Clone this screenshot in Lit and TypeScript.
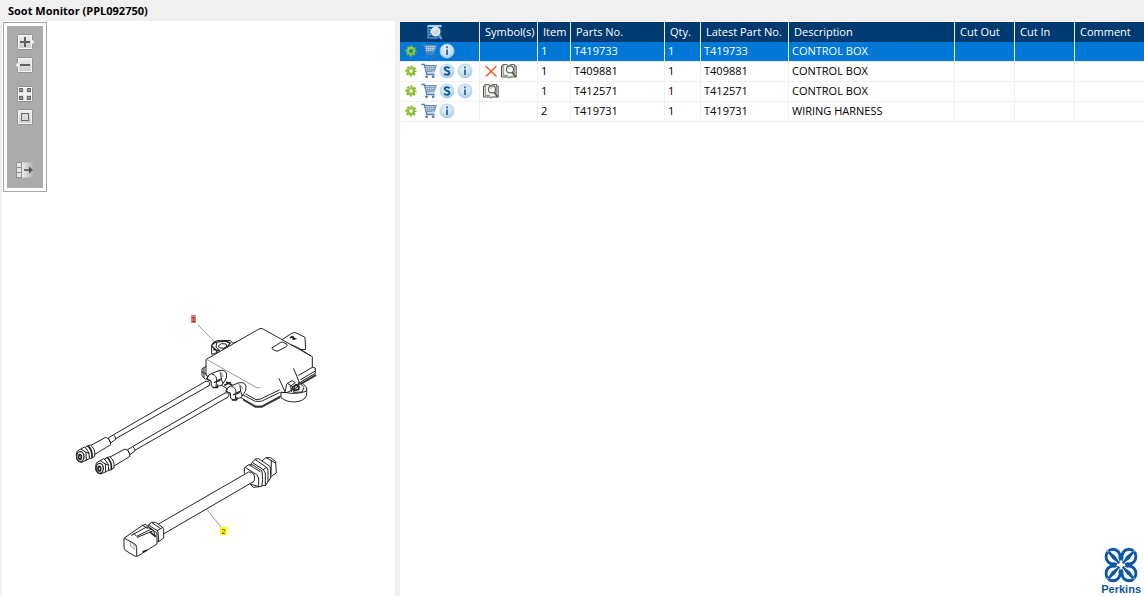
import { LitElement, html, css, svg, nothing } from "lit";
import { customElement, property, state } from "lit/decorators.js";
import { classMap } from "lit/directives/class-map.js";

interface Part {
  item: string;
  partNo: string;
  qty: string;
  latest: string;
  description: string;
  actions: string[];
  symbols: string[];
}

const PARTS: Part[] = [
  { item: "1", partNo: "T419733", qty: "1", latest: "T419733", description: "CONTROL BOX", actions: ["gear", "cart", "info"], symbols: [] },
  { item: "1", partNo: "T409881", qty: "1", latest: "T409881", description: "CONTROL BOX", actions: ["gear", "cart", "super", "info"], symbols: ["cross", "book"] },
  { item: "1", partNo: "T412571", qty: "1", latest: "T412571", description: "CONTROL BOX", actions: ["gear", "cart", "super", "info"], symbols: ["book"] },
  { item: "2", partNo: "T419731", qty: "1", latest: "T419731", description: "WIRING HARNESS", actions: ["gear", "cart", "info"], symbols: [] },
];

const ICON_LABELS: Record<string, string> = {
  gear: "Options",
  cart: "Add to cart",
  super: "Supersession",
  info: "Information",
  cross: "Not serviced",
  book: "Look up publication",
};

const ball = svg`
  <defs><radialGradient id="b" cx=".45" cy=".35" r=".7">
    <stop offset="0" stop-color="#eaf3fa"/><stop offset=".65" stop-color="#c6dff1"/><stop offset="1" stop-color="#8fb9db"/>
  </radialGradient></defs>
  <circle cx="8" cy="8" r="7" fill="url(#b)" stroke="#b4cfe6" stroke-width=".8"/>`;

const ICONS: Record<string, unknown> = {
  gear: svg`
    <circle cx="8" cy="8" r="4.5" fill="none" stroke="#83b92c" stroke-width="2.2" stroke-dasharray="2.1 1.434" stroke-dashoffset="1.05"/>
    <circle cx="8" cy="8" r="3" fill="none" stroke="#8cc234" stroke-width="2.6"/>
    <path d="M4.9 6.8A3.4 3.4 0 0 1 9 4.8" fill="none" stroke="#b8dc6c" stroke-width="1"/>`,
  cart: svg`
    <path d="M.2 1.5H3.4L5.8 11.5H13.6" fill="none" stroke="#4a7fb5" stroke-width="1.3"/>
    <path d="M3.8 2.5H15.3L13.4 8L5.2 8.6Z" fill="#d2dfec" stroke="#5f8dbb" stroke-width="1"/>
    <path d="M6.3 3V8.4M8.5 3V8.4M10.7 3V8.2M12.9 3V8M4.3 4.5H14.6M4.8 6.5H14" stroke="#6f93b8" stroke-width=".7"/>
    <path d="M13.6 8.4L12.6 10H5.9" fill="none" stroke="#7d9fc2" stroke-width=".8"/>
    <circle cx="5.6" cy="13.8" r="1.3" fill="#3d74ad"/><circle cx="12.2" cy="13.8" r="1.3" fill="#3d74ad"/>`,
  info: svg`${ball}
    <circle cx="8" cy="4.4" r="1.1" fill="#3a70a3"/><path d="M8 6.6V12" stroke="#3a70a3" stroke-width="2"/>`,
  super: svg`${ball}
    <path d="M10.6 5.4C9.6 3.8 5.6 3.9 5.7 6C5.8 8.2 10.5 7.4 10.4 9.9C10.3 12.3 6.3 12.2 5.2 10.4" fill="none" stroke="#155f97" stroke-width="2"/>`,
  cross: svg`<path d="M3 3.5L13 13M13 3.5L3.4 13" stroke="#f0602c" stroke-width="1.6" stroke-linecap="round"/>`,
  book: svg`
    <path d="M.5 3H2V1.6H5.8L7.6 3L9.4 1.6H13.6V3H15.2V14H9L7.6 15L6.4 14H.5Z" fill="#f1f1ec" stroke="#55554f" stroke-width="1"/>
    <path d="M2.2 3V12.4H6.2L7.6 13.6M13.6 3V10" fill="none" stroke="#6b6b66" stroke-width=".8"/>
    <circle cx="9" cy="6.4" r="3.5" fill="#f8f9f7" stroke="#62625d" stroke-width="1.1"/>
    <path d="M7.4 6A2 2 0 0 1 9.4 4.6" fill="none" stroke="#aaa" stroke-width=".8"/>
    <path d="M11.2 9.2L14.8 14" stroke="#5d574a" stroke-width="2"/>`,
};

const tile = svg`
  <defs><linearGradient id="t" x1="0" y1="0" x2="0" y2="1">
    <stop offset="0" stop-color="#f0f0f0"/><stop offset="1" stop-color="#cacaca"/>
  </linearGradient></defs>`;
const square = svg`<rect x="2.5" y="2.5" width="15" height="15" rx="1" fill="url(#t)" stroke="#929292"/><rect x="3.5" y="3.5" width="13" height="13" fill="none" stroke="#f4f4f4"/>`;

const TOOLS = [
  {
    label: "Zoom in",
    cls: "",
    art: svg`${tile}${square}<path d="M17 7.5L19.5 10L17 12.5Z" fill="#ececec"/>
      <path d="M5 10H15M10 5V15" stroke="#606060" stroke-width="2"/>`,
  },
  {
    label: "Zoom out",
    cls: "",
    art: svg`${tile}${square}<path d="M3 7.5L.5 10L3 12.5Z" fill="#ececec"/>
      <path d="M5 10H15" stroke="#606060" stroke-width="2"/>`,
  },
  {
    label: "Fit to window",
    cls: "group",
    art: svg`${tile}${square}
      <path d="M10 3V17M3 10H17" stroke="#f2f2f2" stroke-width="2"/>
      <g fill="#999" stroke="#686868"><rect x="4.5" y="4.5" width="3" height="3"/><rect x="12.5" y="4.5" width="3" height="3"/><rect x="4.5" y="12.5" width="3" height="3"/><rect x="12.5" y="12.5" width="3" height="3"/></g>`,
  },
  {
    label: "Actual size",
    cls: "",
    art: svg`${tile}${square}<rect x="6.5" y="6.5" width="7" height="7" fill="#dcdcdc" stroke="#686868"/>`,
  },
  {
    label: "Detach panel",
    cls: "last",
    art: svg`
      <defs><linearGradient id="f"><stop offset="0" stop-color="#ededed"/><stop offset="1" stop-color="#ababab"/></linearGradient></defs>
      <rect x="7" y="2.5" width="12" height="15" fill="url(#f)"/>
      <path d="M1.5 2.5H6M1.5 7.5H6M1.5 12.5H6M1.5 17.5H6M6.5 2V18M1.5 2V18" stroke="#909090"/>
      <path d="M2 3H6V7H2ZM2 8H6V12H2ZM2 13H6V17H2Z" fill="#e6e6e6"/>
      <path d="M9 10H16" stroke="#50554e" stroke-width="1.6"/><path d="M14 6.6L18 10L14 13.4Z" fill="#50554e"/>`,
  },
];

@customElement("tool-palette")
class ToolPalette extends LitElement {
  static styles = css`
    :host { display: block; border: 1px solid #a8a8a8; background: #fff; padding: 3px; }
    .bar { display: flex; flex-direction: column; align-items: center; gap: 3px; background: #ababab; padding: 6px 8px 8px; }
    .tool { display: block; width: 20px; height: 20px; padding: 0; border: 0; background: none; }
    .tool svg { display: block; }
    .group { margin-top: 6px; }
    .last { margin-top: 30px; }
  `;
  render() {
    return html`<div class="bar" role="toolbar" aria-label="View">
      ${TOOLS.map((t) => html`<button class="tool ${t.cls}" aria-label=${t.label}>
        <svg width="20" height="20" viewBox="0 0 20 20">${t.art}</svg>
      </button>`)}
    </div>`;
  }
}

@customElement("parts-drawing")
class PartsDrawing extends LitElement {
  static styles = css`
    :host { display: block; }
    .art { display: block; width: 100%; height: auto; font-family: "Liberation Sans", Arial, sans-serif; }
    .ink { fill: none; stroke: #222; stroke-width: 3; stroke-linejoin: round; stroke-linecap: round; }
    .thin { stroke-width: 2; stroke: #666; }
    .bold { stroke-width: 6; stroke: #333; }
    .solid { fill: #fff; }
    .label { font-size: 7px; text-anchor: middle; fill: #222; }
  `;

  private plug() {
    return svg`
      <path class="solid" d="M72 229L122 202Q136 206 137 224L86 255Z"/>
      <path class="solid" d="M131 203L145 195Q153 199 152 208L138 218Z"/>
      <path class="solid" d="M62 231L76 225Q92 236 89 259L76 266Z"/>
      <path d="M69 228Q83 240 81 263" stroke-width="5"/>
      <path class="solid" d="M37 243L58 231Q74 242 73 266L50 277Q34 276 34 258Z"/>
      <path class="solid" d="M49 238L63 247L73 250M63 247L64 271"/>
      <ellipse cx="46" cy="260" rx="11" ry="15" stroke-width="4"/>
      <ellipse cx="45" cy="261" rx="4" ry="7" stroke-width="5"/>`;
  }

  private gland() {
    return svg`
      <path class="solid" d="M88 224L116 212Q136 207 140 222Q141 236 134 243L126 255L103 263L94 258L93 242L80 237Z"/>
      <path d="M88 224Q80 230 82 239L92 243M97 222Q111 226 110 242L108 260M110 242L124 236L122 220M124 236L128 250"/>
      <path class="thin" d="M113 213Q128 217 129 230"/>
      <path d="M103 247L120 241M99 263L112 263L113 255" stroke-width="4"/>`;
  }

  render() {
    return html`<svg class="art" viewBox="2 21 393 575" role="img" aria-label="Soot monitor assembly">
      <g class="ink" transform="translate(180 300) scale(.33333)">
        <path class="solid" d="M95 162V136Q98 122 122 121L152 122L158 130L180 122L150 145Z"/>
        <path d="M97 134Q104 125 122 125Q144 122 150 129Q146 140 130 147M96 139L108 150L112 158M101 149L118 152" stroke-width="4"/>
        <path d="M116 137L124 131L138 132L140 140L130 145L119 143ZM110 129L108 142L118 150M137 124L151 130"/>
        <path class="solid" d="M306 119L335 100Q343 95 351 100L375 112L377 148L350 150Z"/>
        <path d="M331 113L340 111L339 118L348 116M334 109L343 114" stroke-width="4"/>
        <path class="solid" d="M79 178L235 88Q243 82 251 88L397 170V202L406 204V220L372 240L300 289L246 319H224L170 285L79 226Z"/>
        <path class="bold" d="M406 226L362 252M298 292L246 320H226L192 300"/>
        <path d="M404 214L362 239M397 202L356 226M298 278L244 304H226L186 283M298 270L242 297L228 299L198 282"/>
        <path class="thin" d="M79 178L232 264L240 262M386 164L396 170"/>
        <path d="M277 143L302 127Q307 125 312 128L321 133Q323 137 319 140L294 153Q288 154 284 151L278 148Z"/>
        <path d="M333 134L352 142L391 167"/>
        <path class="solid" stroke="none" d="M297 236L341 206L360 252L378 262V292L344 306L303 293Z"/>
        <path class="solid" d="M303 278V293Q318 306 344 306Q374 303 380 286V262Q372 250 356 247L352 262L322 277Z"/>
        <path d="M297 236L316 277Q345 285 378 274M303 278L316 277M341 206L360 252"/>
        <path d="M316 272L320 252L336 242L346 248L332 258L334 275M346 254L362 252L372 262L366 276L342 277ZM324 251L336 259" />
        <path d="M338 261L348 256L357 259L356 268L344 271L337 267Z" stroke-width="5"/>
        <path d="M78 199L66 207V227L76 238M72 204V232M66 216L78 222"/>
        <path class="thin" d="M54 75L103 125"/>
        <path d="M140 247L155 254M134 255L150 248" stroke-width="5"/>
        ${this.gland()}
        <g transform="translate(58 37)">${this.gland()}</g>
      </g>
      <g class="ink" transform="translate(65 370) scale(.33333)">
        <path class="solid" stroke="none" d="M146 193L426 31L432 44L152 206Z"/>
        <path d="M146 194L422 34M152 206L432 47"/>
        <path class="solid" stroke="none" d="M204 228L482 66L490 80L210 242Z"/>
        <path d="M204 229L480 69M211 240L488 82"/>
        <path class="solid" d="M422 34Q430 30 434 39L432 47M480 69Q488 65 493 74L488 82"/>
        ${this.plug()}
        <g transform="translate(58 35)">${this.plug()}</g>
      </g>
      <g class="ink" transform="translate(110 445) scale(.33333)">
        <path class="solid" d="M455 48L468 38L482 38L497 50L499 84L480 97L455 92Z"/>
        <path d="M470 39L484 47L483 90M484 47L497 54"/>
        <path class="solid" d="M425 54L436 42L446 41L481 65L482 99L466 122L444 119L425 100Z"/>
        <path d="M428 53L460 74L466 84V121M436 44L470 67L474 76V110M460 74L470 67"/>
        <path class="solid" d="M404 68L416 59L429 60L456 78L458 104L455 124L430 127L420 116L424 110L404 96Z"/>
        <path d="M407 68L440 89L446 99V126M418 60L450 80M422 118L444 124"/>
        <path class="solid" stroke="none" d="M144 238L412 80Q434 78 434 98L433 108L160 266Z"/>
        <path d="M144 238L416 81Q434 80 434 100L432 109L162 266"/>
        <path class="solid" d="M113 243L124 232H137L158 247Q162 252 161 260V279L146 290L110 276Z"/>
        <path d="M115 240L142 257Q146 263 146 290M142 257L158 247M126 233L152 251"/>
        <path class="solid" d="M43 279L95 243L106 238L141 264V297L84 333Q78 336 72 332L46 316Q42 312 42 306Z"/>
        <path d="M43 280L72 295Q80 299 80 308V331M64 271L110 246L130 255L136 275M72 266L80 274L124 252M82 277L128 258M96 240L112 250"/>
        <path d="M66 293Q74 298 75 306M62 293V304L75 313" class="thin"/>
        <path d="M99 320L110 316M121 262L136 274" stroke-width="5"/>
        <path class="thin" d="M291 194L333 246"/>
      </g>
      <rect x="191" y="315" width="5" height="8" fill="#f27878"/>
      <text class="label" x="193.5" y="322">1</text>
      <rect x="220" y="527" width="7" height="8" fill="#ff0"/>
      <text class="label" x="223.5" y="534">2</text>
    </svg>`;
  }
}

@customElement("parts-table")
class PartsTable extends LitElement {
  @property({ attribute: false }) parts: Part[] = [];
  @state() selected = 0;

  static styles = css`
    :host { display: block; }
    .grid { width: 100%; table-layout: fixed; border-collapse: separate; border-spacing: 0; }
    .c-actions { width: 80px; }
    .c-symbols { width: 58px; }
    .c-item { width: 33px; }
    .c-part { width: 94px; }
    .c-qty { width: 36px; }
    .c-latest { width: 88px; }
    .c-desc { width: 166px; }
    .c-cut { width: 60px; }
    th { height: 20px; padding: 0 0 0 5px; background: #003a70; color: #fff; font-weight: 400; text-align: left; border-right: 1px solid #f0f0f0; white-space: nowrap; line-height: 16px; }
    td { height: 19px; padding: 0 0 0 3px; border-right: 1px solid #f0f0f0; border-bottom: 1px solid #f0f0f0; white-space: nowrap; line-height: 18px; vertical-align: top; }
    th:last-child, td:last-child { border-right: 0; }
    .find { padding: 0 9px 0 0; }
    .find .icon { margin: 0 auto; }
    .icons { padding: 0 0 0 2px; }
    .row { display: flex; }
    .icon { display: flex; align-items: center; justify-content: center; width: 18px; height: 18px; padding: 0; border: 0; background: none; }
    .selected td { background: #0078d7; color: #fff; }
  `;

  private icons(names: string[]) {
    return html`<div class="row">${names.map((n) => html`<button class="icon" aria-label=${ICON_LABELS[n]}>
      <svg width="16" height="16" viewBox="0 0 16 16">${ICONS[n]}</svg></button>`)}</div>`;
  }

  render() {
    return html`<table class="grid">
      <colgroup>
        <col class="c-actions"><col class="c-symbols"><col class="c-item"><col class="c-part"><col class="c-qty">
        <col class="c-latest"><col class="c-desc"><col class="c-cut"><col class="c-cut"><col>
      </colgroup>
      <thead><tr>
        <th class="find"><button class="icon" aria-label="Search parts"><svg width="16" height="16" viewBox="0 0 16 16">
          <path d="M.5 .5H14.5V14.5H.5Z" fill="#1c5c95"/><path d="M.5 1H14.5V3H.5Z" fill="#9fd0f0"/><path d="M1 1V14H11" fill="none" stroke="#58a4da"/>
          <path d="M2.5 5.5H4M2.5 8H4M2.5 10.5H4" stroke="#d5ecfb"/>
          <path d="M11.4 11L14.8 15" stroke="#5fa3d8" stroke-width="2"/>
          <circle cx="8.6" cy="7.6" r="4.2" fill="#d3d6d9" stroke="#f4f6f8" stroke-width="1.2"/>
          <path d="M6.5 7A2.4 2.4 0 0 1 8.8 5" fill="none" stroke="#fff"/></svg></button></th>
        <th>Symbol(s)</th><th>Item</th><th>Parts No.</th><th>Qty.</th><th>Latest Part No.</th>
        <th>Description</th><th>Cut Out</th><th>Cut In</th><th>Comment</th>
      </tr></thead>
      <tbody>${this.parts.map((p, i) => html`<tr class=${classMap({ selected: i === this.selected })} @click=${() => (this.selected = i)}>
        <td class="icons">${this.icons(p.actions)}</td>
        <td class="icons">${p.symbols.length ? this.icons(p.symbols) : nothing}</td>
        <td>${p.item}</td><td>${p.partNo}</td><td>${p.qty}</td><td>${p.latest}</td><td>${p.description}</td>
        <td></td><td></td><td></td>
      </tr>`)}</tbody>
    </table>`;
  }
}

@customElement("brand-mark")
class BrandMark extends LitElement {
  static styles = css`
    :host { display: flex; flex-direction: column; align-items: center; color: #0b57a4; }
    .name { font: 700 11px/13px "Liberation Sans", Arial, sans-serif; }
    .mark { display: block; }
  `;
  render() {
    const ring = svg`
      <circle cx="9.6" cy="9.6" r="7.4" fill="none" stroke="#0b57a4" stroke-width="3"/>
      <path d="M4.5 4.5Q13.5 5.5 16.5 16.5Q5.5 13.5 4.5 4.5Z" fill="#0b57a4" stroke="#fff" stroke-width="1.6"/>
      <path d="M3.6 5.6L5.6 3.6L17 15.6L15.6 17Z" fill="#0b57a4"/>`;
    return html`<svg class="mark" width="34" height="36" viewBox="0 0 36 36" preserveAspectRatio="none" aria-hidden="true">
        <g>${ring}</g>
        <g transform="translate(36 0) scale(-1 1)">${ring}</g>
        <g transform="translate(0 36) scale(1 -1)">${ring}</g>
        <g transform="translate(36 36) scale(-1 -1)">${ring}</g>
      </svg>
      <span class="name">Perkins</span>`;
  }
}

@customElement("app-root")
class AppRoot extends LitElement {
  static styles = css`
    :host { display: flex; flex-direction: column; min-height: 100vh; background: #f0f0f0; color: #000; font: 11px/16px "Open Sans", "Noto Sans", sans-serif; }
    .title { margin: 0; padding: 3px 8px 2px; font-size: 11px; line-height: 16px; font-weight: 700; }
    .panes { flex: 1; display: grid; grid-template-columns: minmax(0, 393fr) minmax(0, 744fr); gap: 5px; padding-left: 2px; }
    .pane { background: #fff; position: relative; }
    .palette { position: absolute; left: 1px; top: 1px; }
    .list { display: flex; flex-direction: column; padding-top: 1px; }
    .brand { margin: auto 3px 0 0; align-self: flex-end; }
  `;
  render() {
    return html`
      <h1 class="title">Soot Monitor (PPL092750)</h1>
      <main class="panes">
        <section class="pane">
          <parts-drawing></parts-drawing>
          <tool-palette class="palette"></tool-palette>
        </section>
        <section class="pane list">
          <parts-table .parts=${PARTS}></parts-table>
          <brand-mark class="brand"></brand-mark>
        </section>
      </main>`;
  }
}
